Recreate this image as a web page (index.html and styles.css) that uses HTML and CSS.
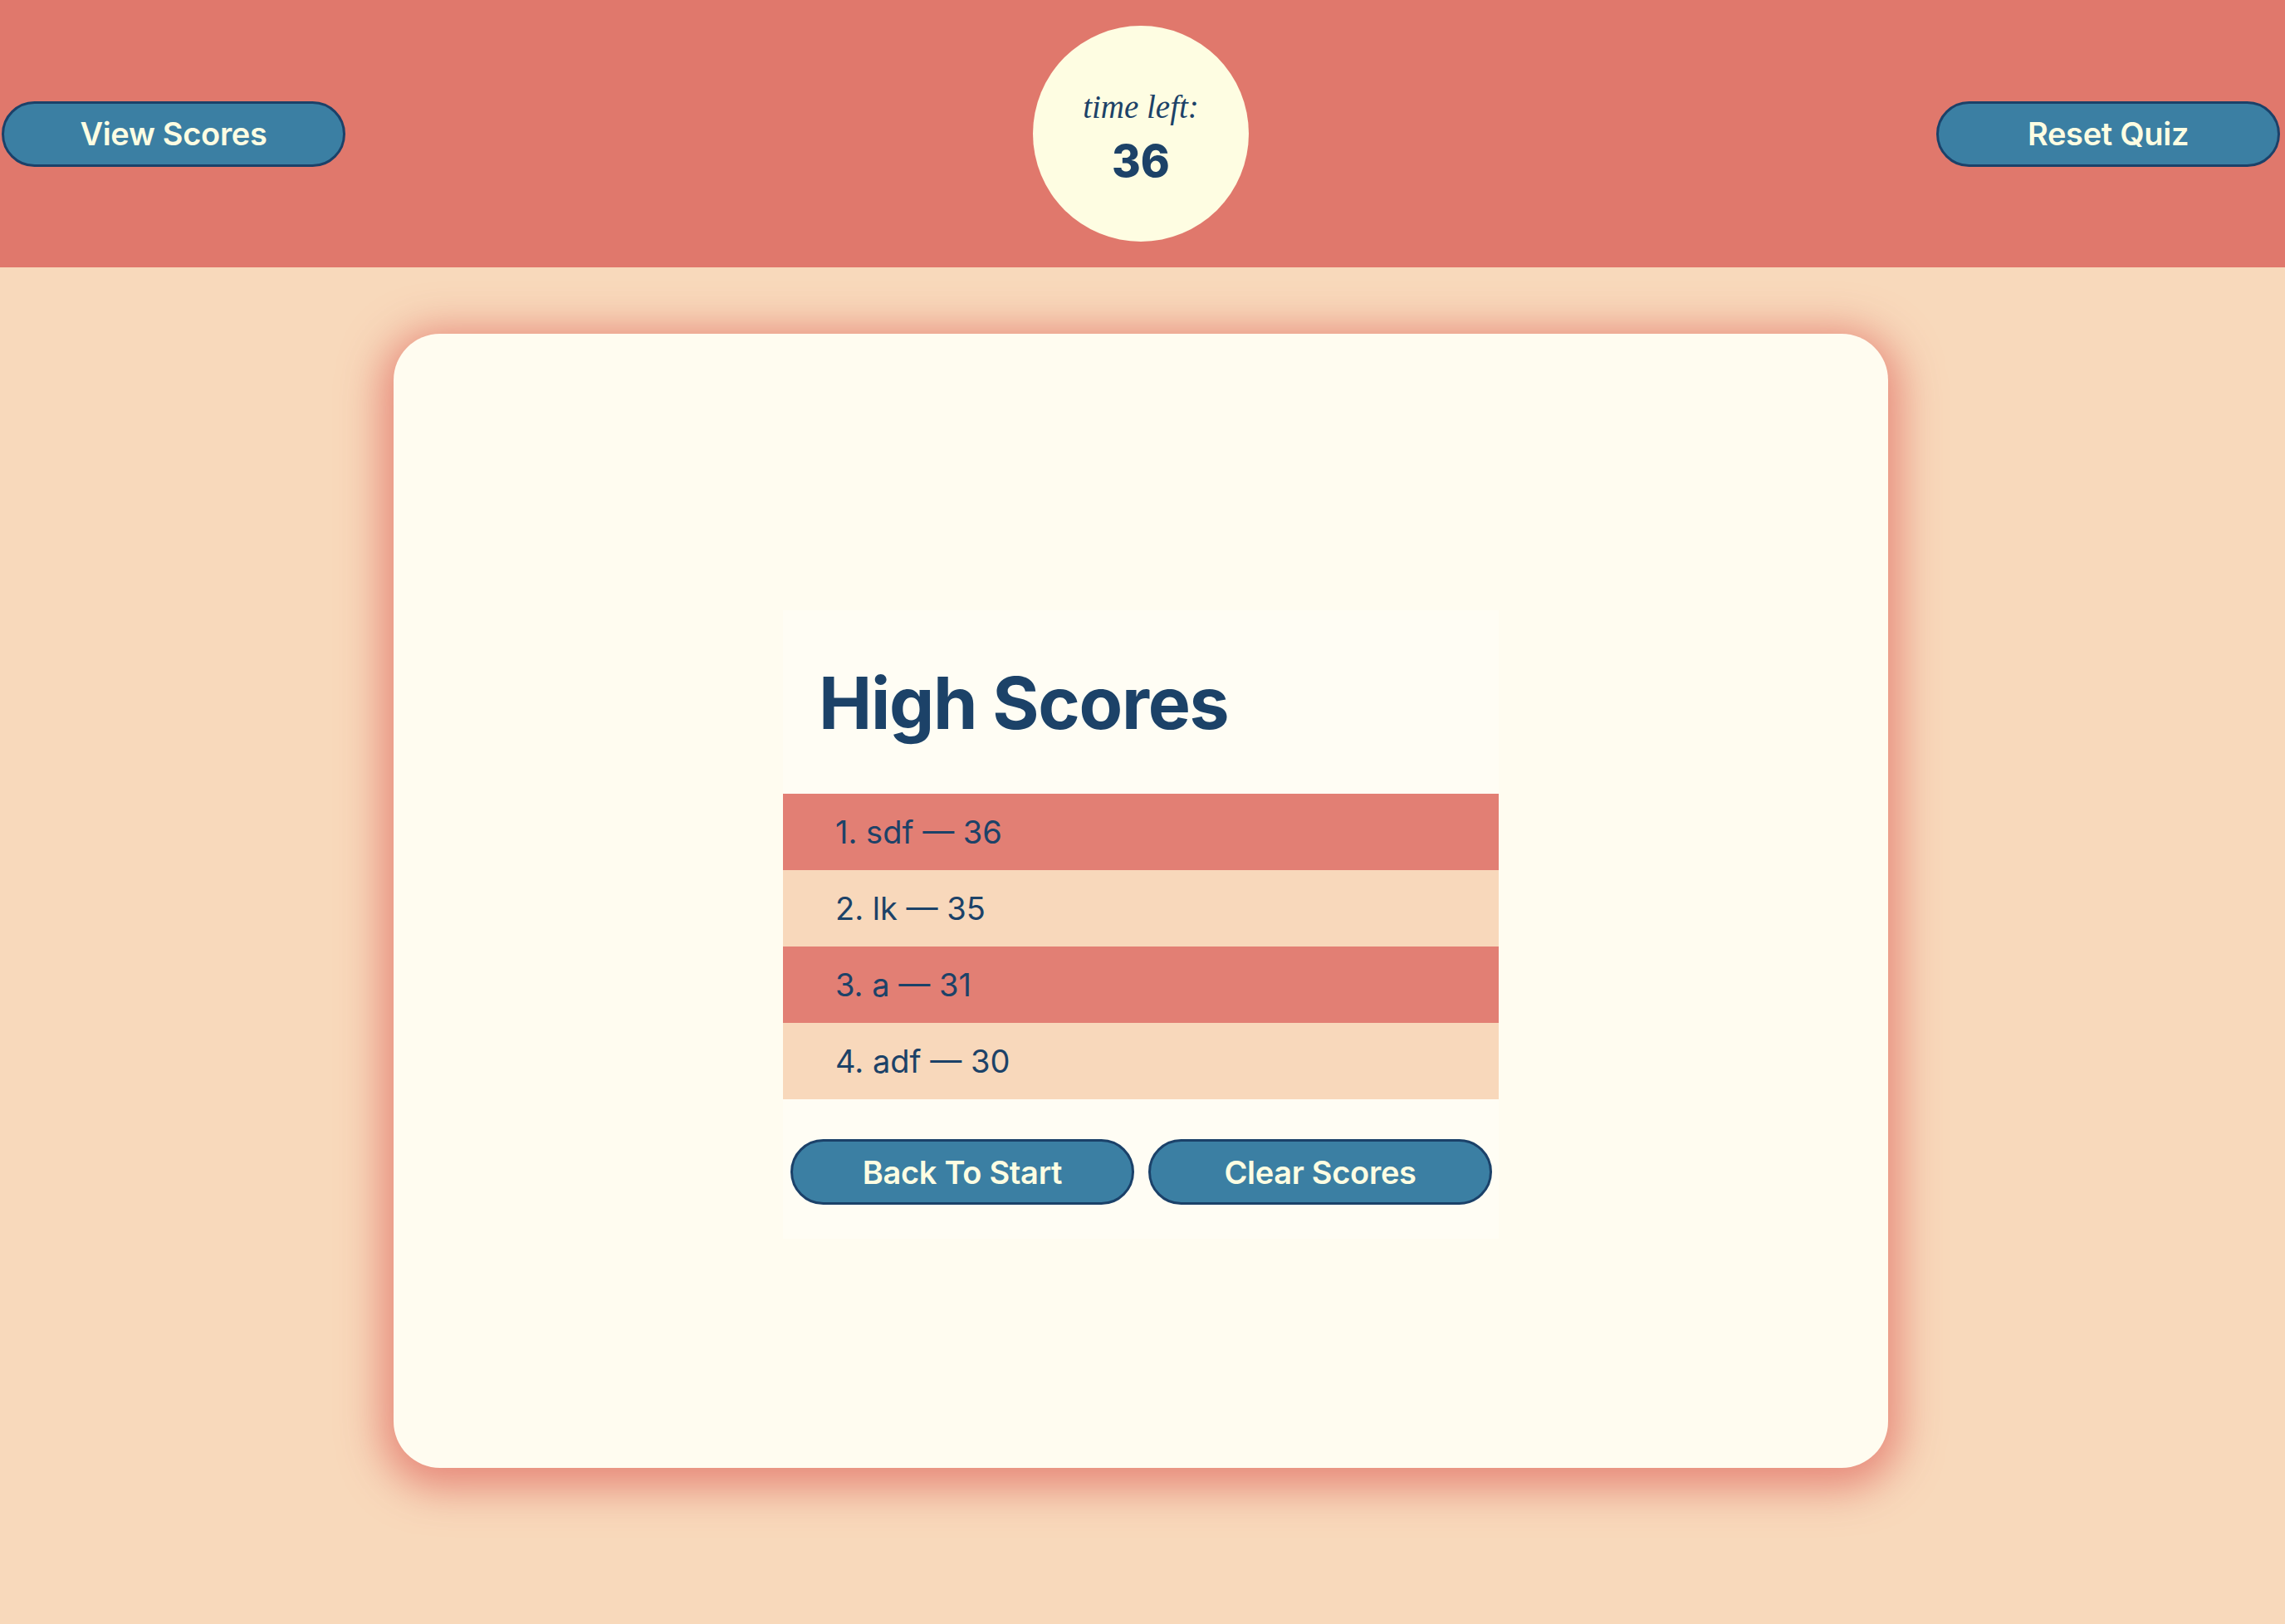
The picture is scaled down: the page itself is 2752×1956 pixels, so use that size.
FILE: index.html
```html
<!DOCTYPE html>
<html>
<head>
<meta charset="utf-8">
<link rel="stylesheet" href="styles.css">
</head>
<body>
<header class="topbar">
  <button class="pill">View Scores</button>
  <div class="timer">
    <div class="timer-label">time left:</div>
    <div class="timer-value">36</div>
  </div>
  <button class="pill">Reset Quiz</button>
</header>
<main class="stage">
  <section class="card">
    <div class="scores">
      <h1 class="scores-title">High Scores</h1>
      <ol class="score-list">
        <li class="score-row odd">1. sdf — 36</li>
        <li class="score-row even">2. lk — 35</li>
        <li class="score-row odd">3. a — 31</li>
        <li class="score-row even">4. adf — 30</li>
      </ol>
      <div class="actions">
        <button class="pill">Back To Start</button>
        <button class="pill">Clear Scores</button>
      </div>
    </div>
  </section>
</main>
</body>
</html>
```
FILE: styles.css
```css
* { box-sizing: border-box; }
html, body {
  margin: 0;
  padding: 0;
}
body {
  background: #f8d9bb;
  font-family: Inter, "Liberation Sans", sans-serif;
  color: #1c4268;
  min-height: 1956px;
}
.topbar {
  height: 322px;
  background: #e0786c;
  display: flex;
  align-items: center;
  justify-content: space-between;
  padding: 0 6px 0 2px;
}
.pill {
  width: 414px;
  height: 79px;
  border-radius: 40px;
  border: 3px solid #1b4169;
  background: #3b7fa3;
  color: #fdfde2;
  font-family: Inter, "Liberation Sans", sans-serif;
  font-weight: 600;
  font-size: 38px;
  letter-spacing: -0.3px;
  padding: 0;
  cursor: pointer;
}
.timer {
  width: 260px;
  height: 260px;
  border-radius: 50%;
  background: #fefde2;
  display: flex;
  flex-direction: column;
  align-items: center;
  justify-content: center;
  padding-top: 10px;
}
.timer-label {
  font-family: "Liberation Serif", serif;
  font-style: italic;
  font-size: 39px;
  line-height: 44px;
  color: #1c4268;
}
.timer-value {
  font-family: Inter, "Liberation Sans", sans-serif;
  font-weight: 800;
  font-size: 53px;
  line-height: 62px;
  margin-top: 12px;
  color: #1c4268;
}
.stage {
  padding-top: 80px;
  display: flex;
  justify-content: center;
}
.card {
  width: 1800px;
  height: 1366px;
  margin-right: 4px;
  background: #fffcf0;
  border-radius: 56px;
  box-shadow: 0 10px 50px 14px rgba(228, 128, 114, 0.9);
  display: flex;
  justify-content: center;
  align-items: flex-start;
  padding-top: 333px;
}
.scores {
  width: 862px;
  background: #fffdf4;
  padding: 60px 0 41px;
}
.scores-title {
  margin: 0 0 56px 43px;
  font-size: 86px;
  line-height: 105px;
  font-weight: 700;
  letter-spacing: -1.3px;
  color: #1c4268;
}
.score-list {
  list-style: none;
  margin: 0;
  padding: 0;
}
.score-row {
  height: 92px;
  display: flex;
  align-items: center;
  padding-left: 63px;
  font-size: 38px;
  font-weight: 400;
  color: #1c4268;
}
.score-row.odd { background: #e27f74; }
.score-row.even { background: #f8d8bb; }
.actions {
  display: flex;
  gap: 17px;
  padding: 0 8px 0 9px;
  margin-top: 48px;
}
```
